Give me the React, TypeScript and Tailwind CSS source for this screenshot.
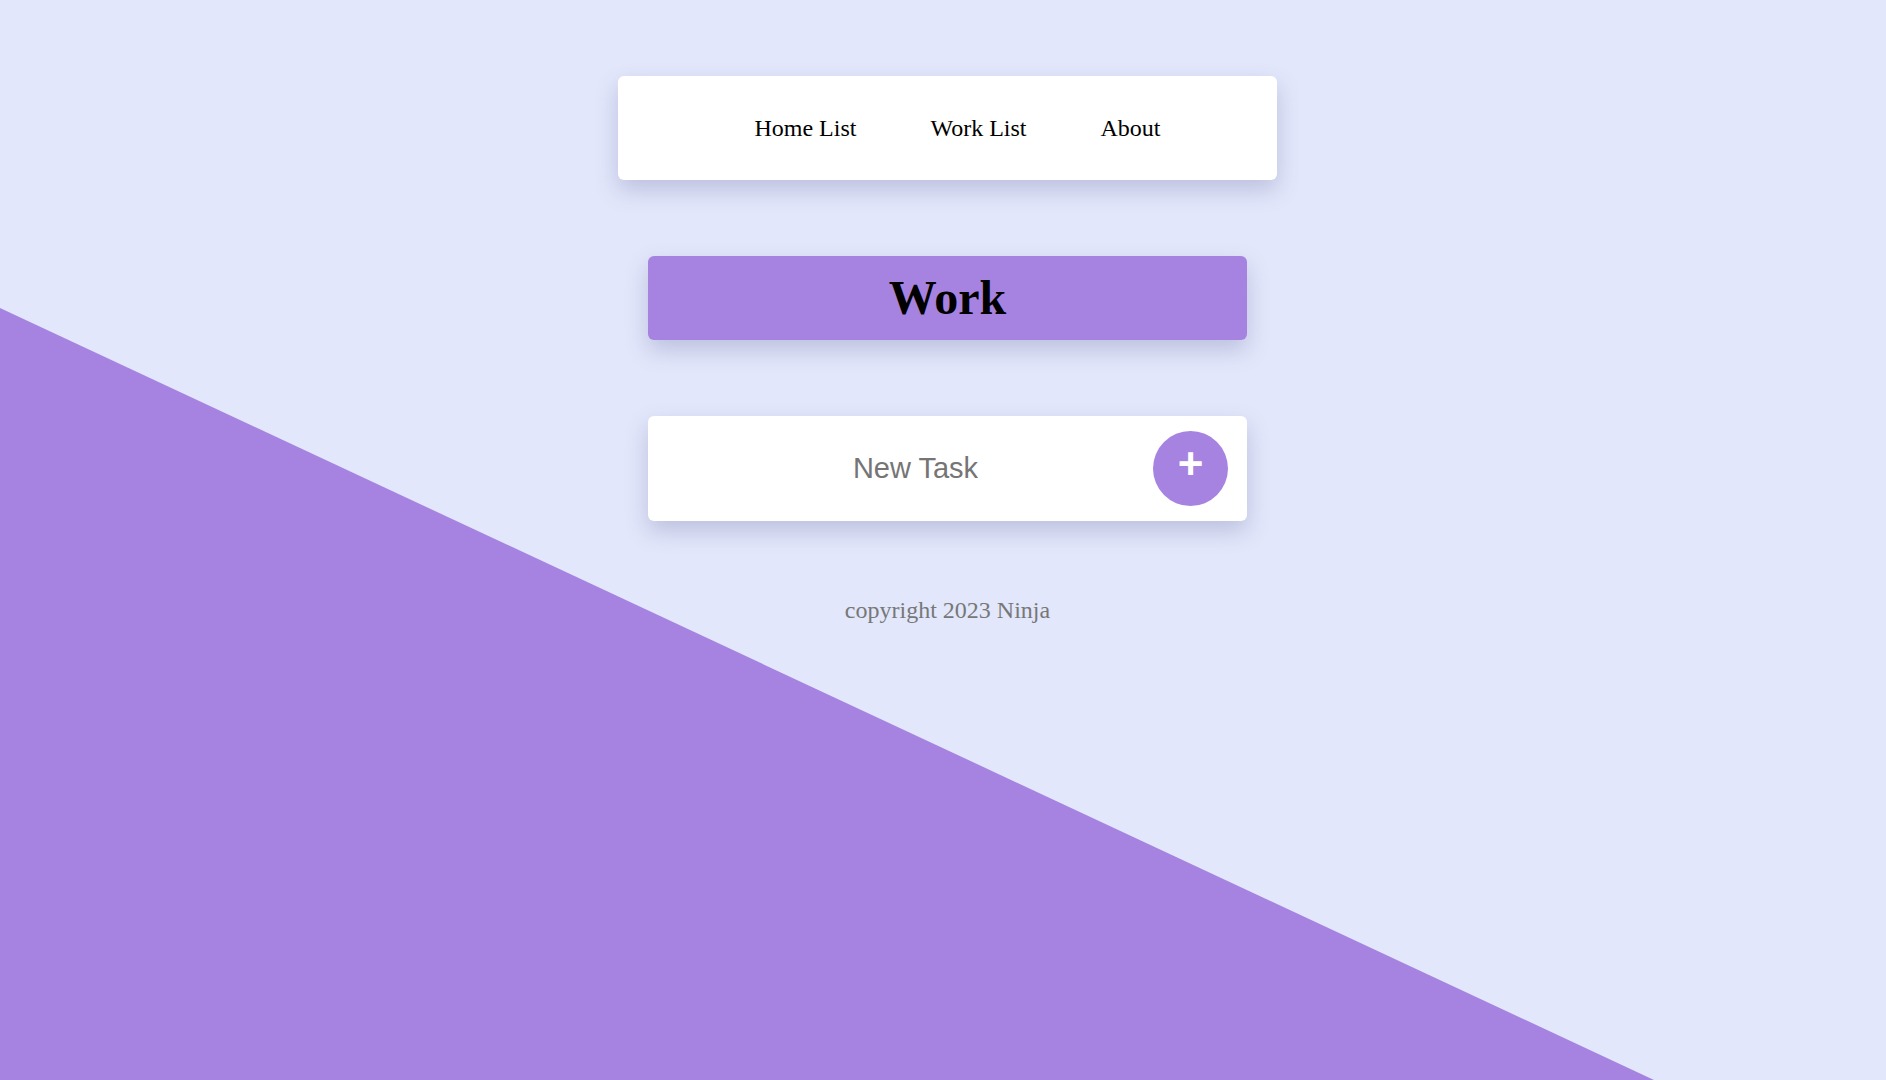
export default function App() {
  const navLinks = ['Home List', 'Work List', 'About']

  return (
    <div className="relative min-h-[1080px] w-full overflow-hidden bg-[#e2e7fb]">
      {/* diagonal backdrop */}
      <div className="absolute inset-0 bg-[#a683e1] [clip-path:polygon(0_308px,1654px_100%,0_100%)]" />

      <div className="relative flex flex-col items-center pl-[9px] pt-[76px]">
        <nav className="flex h-[104px] w-[659px] items-center justify-center gap-[74px] rounded-md bg-white pl-[20px] shadow-[0_10px_22px_rgba(80,80,140,0.25)]">
          {navLinks.map((l) => (
            <a
              key={l}
              href="#"
              className="font-['Liberation_Serif',serif] text-[24px] text-black"
            >
              {l}
            </a>
          ))}
        </nav>

        <div className="mt-[76px] flex h-[84px] w-[599px] items-center justify-center rounded-md bg-[#a683e1] shadow-[0_10px_22px_rgba(80,80,140,0.25)]">
          <h1 className="font-['Liberation_Serif',serif] text-[48px] font-bold leading-none text-black">
            Work
          </h1>
        </div>

        <form className="mt-[76px] flex h-[105px] w-[599px] items-center rounded-md bg-white pr-[19px] shadow-[0_10px_22px_rgba(80,80,140,0.25)]">
          <input
            type="text"
            placeholder="New Task"
            className="ml-[40px] mr-[10px] flex-1 bg-transparent text-center font-['Liberation_Sans',sans-serif] text-[29px] text-black outline-none placeholder:text-[#757575]"
          />
          <button
            type="button"
            className="flex h-[75px] w-[75px] items-center justify-center rounded-full bg-[#a683e1] pb-[9px] font-['Liberation_Sans',sans-serif] text-[44px] font-bold leading-none text-white"
          >
            +
          </button>
        </form>

        <p className="mt-[71px] font-['Liberation_Serif',serif] text-[24px] text-[#777777]">
          copyright 2023 Ninja
        </p>
      </div>
    </div>
  )
}
